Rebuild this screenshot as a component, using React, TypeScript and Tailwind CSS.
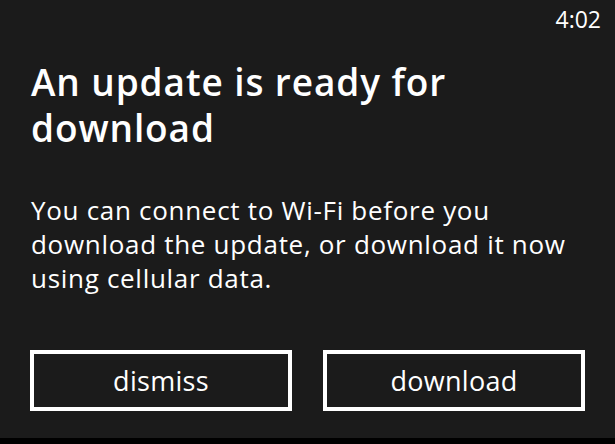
export default function App() {
  return (
    <div className="w-[615px] h-[444px] bg-black flex flex-col" style={{ fontFamily: '"Open Sans", "Noto Sans", sans-serif' }}>
      <div className="h-[438px] bg-[#1b1b1b] flex flex-col text-white">
        <div className="flex justify-end pr-[14px] pt-[5px] text-[23px] leading-[28px]">4:02</div>
        <h1 className="pl-[31px] pr-[20px] mt-[26px] text-[37px] leading-[46px] font-semibold tracking-[0.9px]">
          An update is ready for download
        </h1>
        <p className="pl-[31px] pr-[20px] mt-[42px] text-[26px] leading-[34px] tracking-[0.7px]">
          You can connect to Wi-Fi before you download the update, or download it now using cellular data.
        </p>
        <div className="flex gap-[31px] pl-[30px] mt-[55px]">
          <button className="w-[262px] h-[61px] border-[4px] border-white text-[27px] leading-none tracking-[0.3px]">dismiss</button>
          <button className="w-[262px] h-[61px] border-[4px] border-white text-[27px] leading-none tracking-[0.3px]">download</button>
        </div>
      </div>
    </div>
  );
}
